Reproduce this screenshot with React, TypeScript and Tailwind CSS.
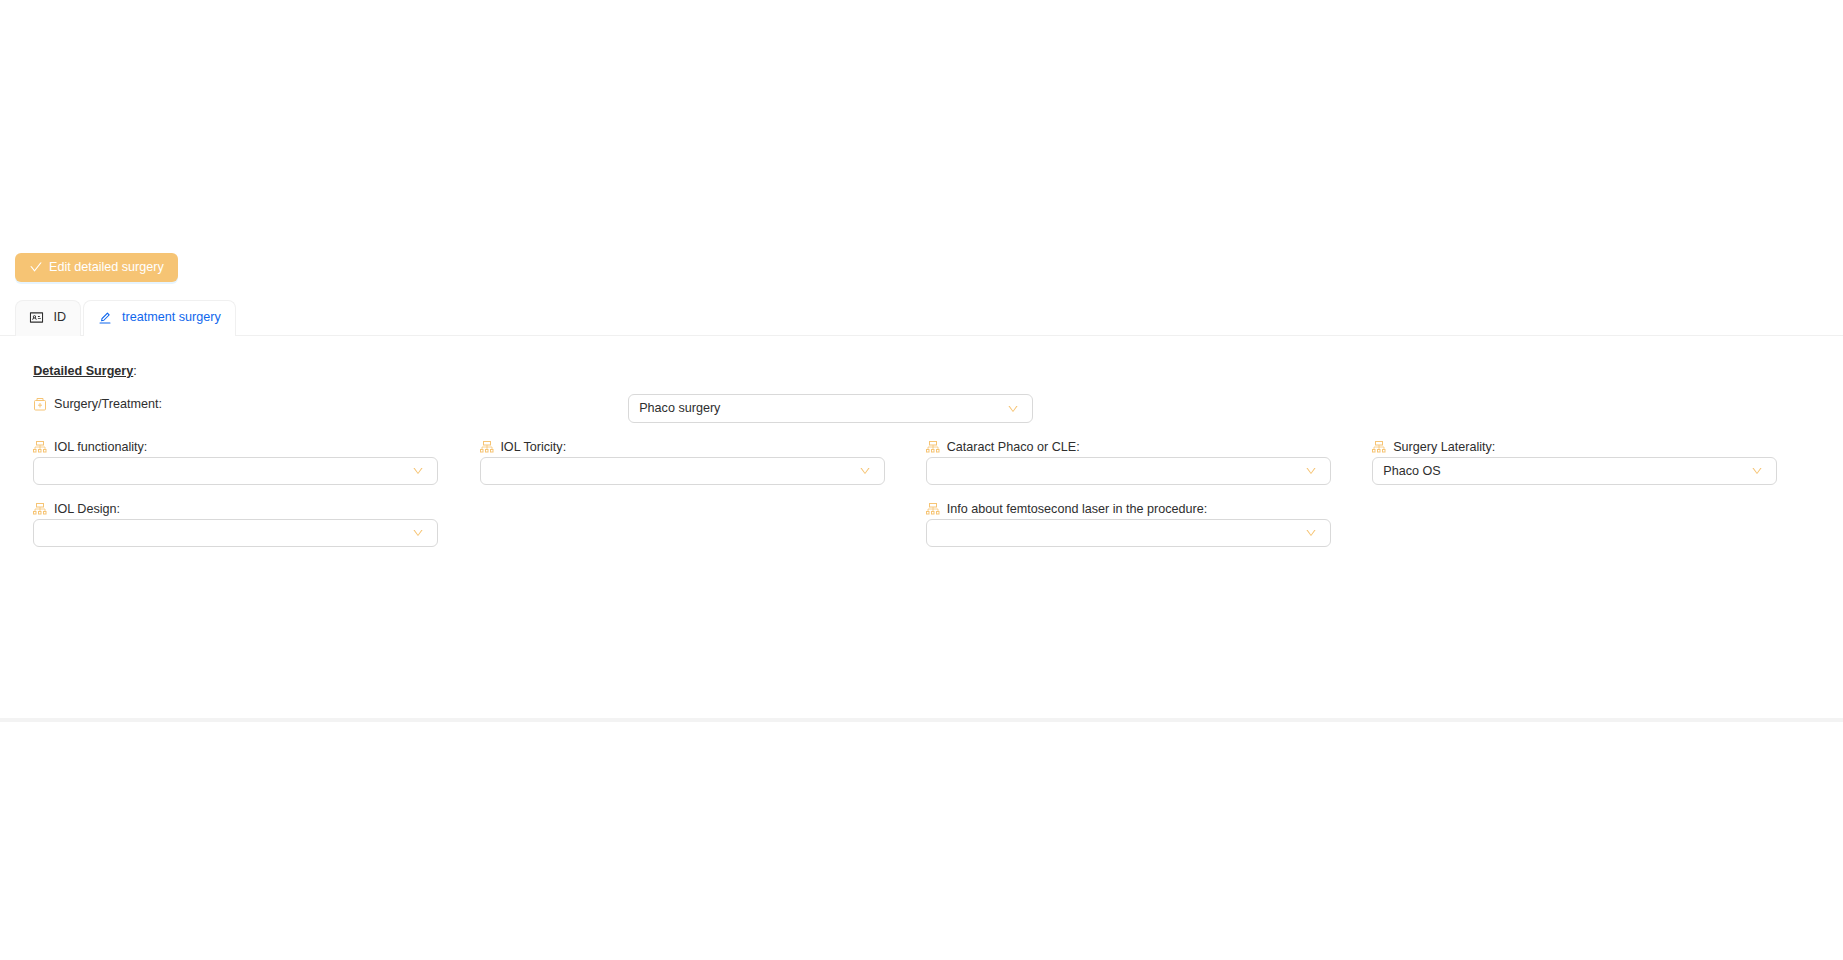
import { AiOutlineCheck, AiOutlineDown, AiOutlineEdit, AiOutlineIdcard } from "react-icons/ai";

function ApartmentIcon() {
  return (
    <svg viewBox="0 0 14 14" className="h-[14px] w-[14px] text-[#f6c474]" fill="none" stroke="currentColor">
      <rect x="3.5" y="1.5" width="7" height="3.5" />
      <path d="M7 5v4M2 9V7h10v2" strokeWidth="0.8" />
      <rect x="0.5" y="9.5" width="2.5" height="2.5" />
      <rect x="5.5" y="9.5" width="2.5" height="2.5" />
      <rect x="10.5" y="9.5" width="2.5" height="2.5" />
    </svg>
  );
}

function MedicineIcon() {
  return (
    <svg viewBox="0 0 14 14" className="h-[14px] w-[14px] text-[#f6c474]" fill="none" stroke="currentColor">
      <rect x="1.5" y="2.5" width="11" height="9.5" rx="1" />
      <path d="M4 2.5v-2h6v2M7 5v4.5M5 7.2h4" />
    </svg>
  );
}

function Select({ value, tall }: { value?: string; tall?: boolean }) {
  return (
    <div
      className={`flex w-[405px] items-center justify-between rounded-[6px] border border-[#d9d9d9] bg-white pl-[10px] pr-[13px] ${
        tall ? "h-[29px]" : "h-[28px]"
      }`}
    >
      <span>{value}</span>
      <AiOutlineDown className="h-[12px] w-[12px] text-[#f6c474]" />
    </div>
  );
}

function Field({ label, value }: { label: string; value?: string }) {
  return (
    <div className="pt-[1px]">
      <div className="flex h-[20px] items-center">
        <ApartmentIcon />
        <span className="ml-[6.8px]">{label}</span>
      </div>
      <Select value={value} />
    </div>
  );
}

export default function App() {
  return (
    <div
      className="h-[960px] w-[1843px] bg-white pt-[253px] text-[12.6px] text-[#2e2e2e]"
      style={{ fontFamily: "'Liberation Sans', Arial, sans-serif" }}
    >
      <div className="h-[465px]">
        <div className="px-[15px]">
          <button className="flex h-[29px] w-[163px] items-center rounded-[6px] bg-[#f6c474] pb-[1px] pl-[14px] text-white shadow-[0_2px_0_rgba(5,145,255,0.1)]">
            <AiOutlineCheck className="h-[14px] w-[14px]" />
            <span className="ml-[6px]">Edit detailed surgery</span>
          </button>
        </div>

        <div className="mt-[18px] flex h-[36px] gap-[2px] border-b border-[#f0f0f0] pl-[15px]">
          <div className="flex h-[36px] w-[66px] items-center rounded-t-[8px] border border-b-0 border-[#f0f0f0] bg-[#fafafa] pb-[2px] pl-[13px]">
            <AiOutlineIdcard className="h-[15px] w-[15px]" />
            <span className="ml-[9.5px]">ID</span>
          </div>
          <div className="flex h-[36px] w-[153px] items-center rounded-t-[8px] border border-b-0 border-[#f0f0f0] bg-white pb-[2px] pl-[14px] text-[#0f67ed]">
            <AiOutlineEdit className="h-[14px] w-[14px]" />
            <span className="ml-[10px]">treatment surgery</span>
          </div>
        </div>

        <div className="pl-[33.2px] pt-[25px]">
          <div className="h-[20px] leading-[20px]">
            <span className="font-bold underline">Detailed Surgery</span>:
          </div>

          <div className="mt-[13px] flex">
            <div className="flex h-[21px] w-[595px] items-center">
              <MedicineIcon />
              <span className="ml-[6.8px]">Surgery/Treatment:</span>
            </div>
            <Select value="Phaco surgery" tall />
          </div>

          <div className="mt-[13px] grid grid-cols-[repeat(4,405px)] gap-x-[41.4px] gap-y-[13px]">
            <Field label="IOL functionality:" />
            <Field label="IOL Toricity:" />
            <Field label="Cataract Phaco or CLE:" />
            <Field label="Surgery Laterality:" value="Phaco OS" />
            <Field label="IOL Design:" />
            <div />
            <Field label="Info about femtosecond laser in the procedure:" />
          </div>
        </div>
      </div>
      <div className="h-[4px] bg-[#f3f3f3]" />
    </div>
  );
}
